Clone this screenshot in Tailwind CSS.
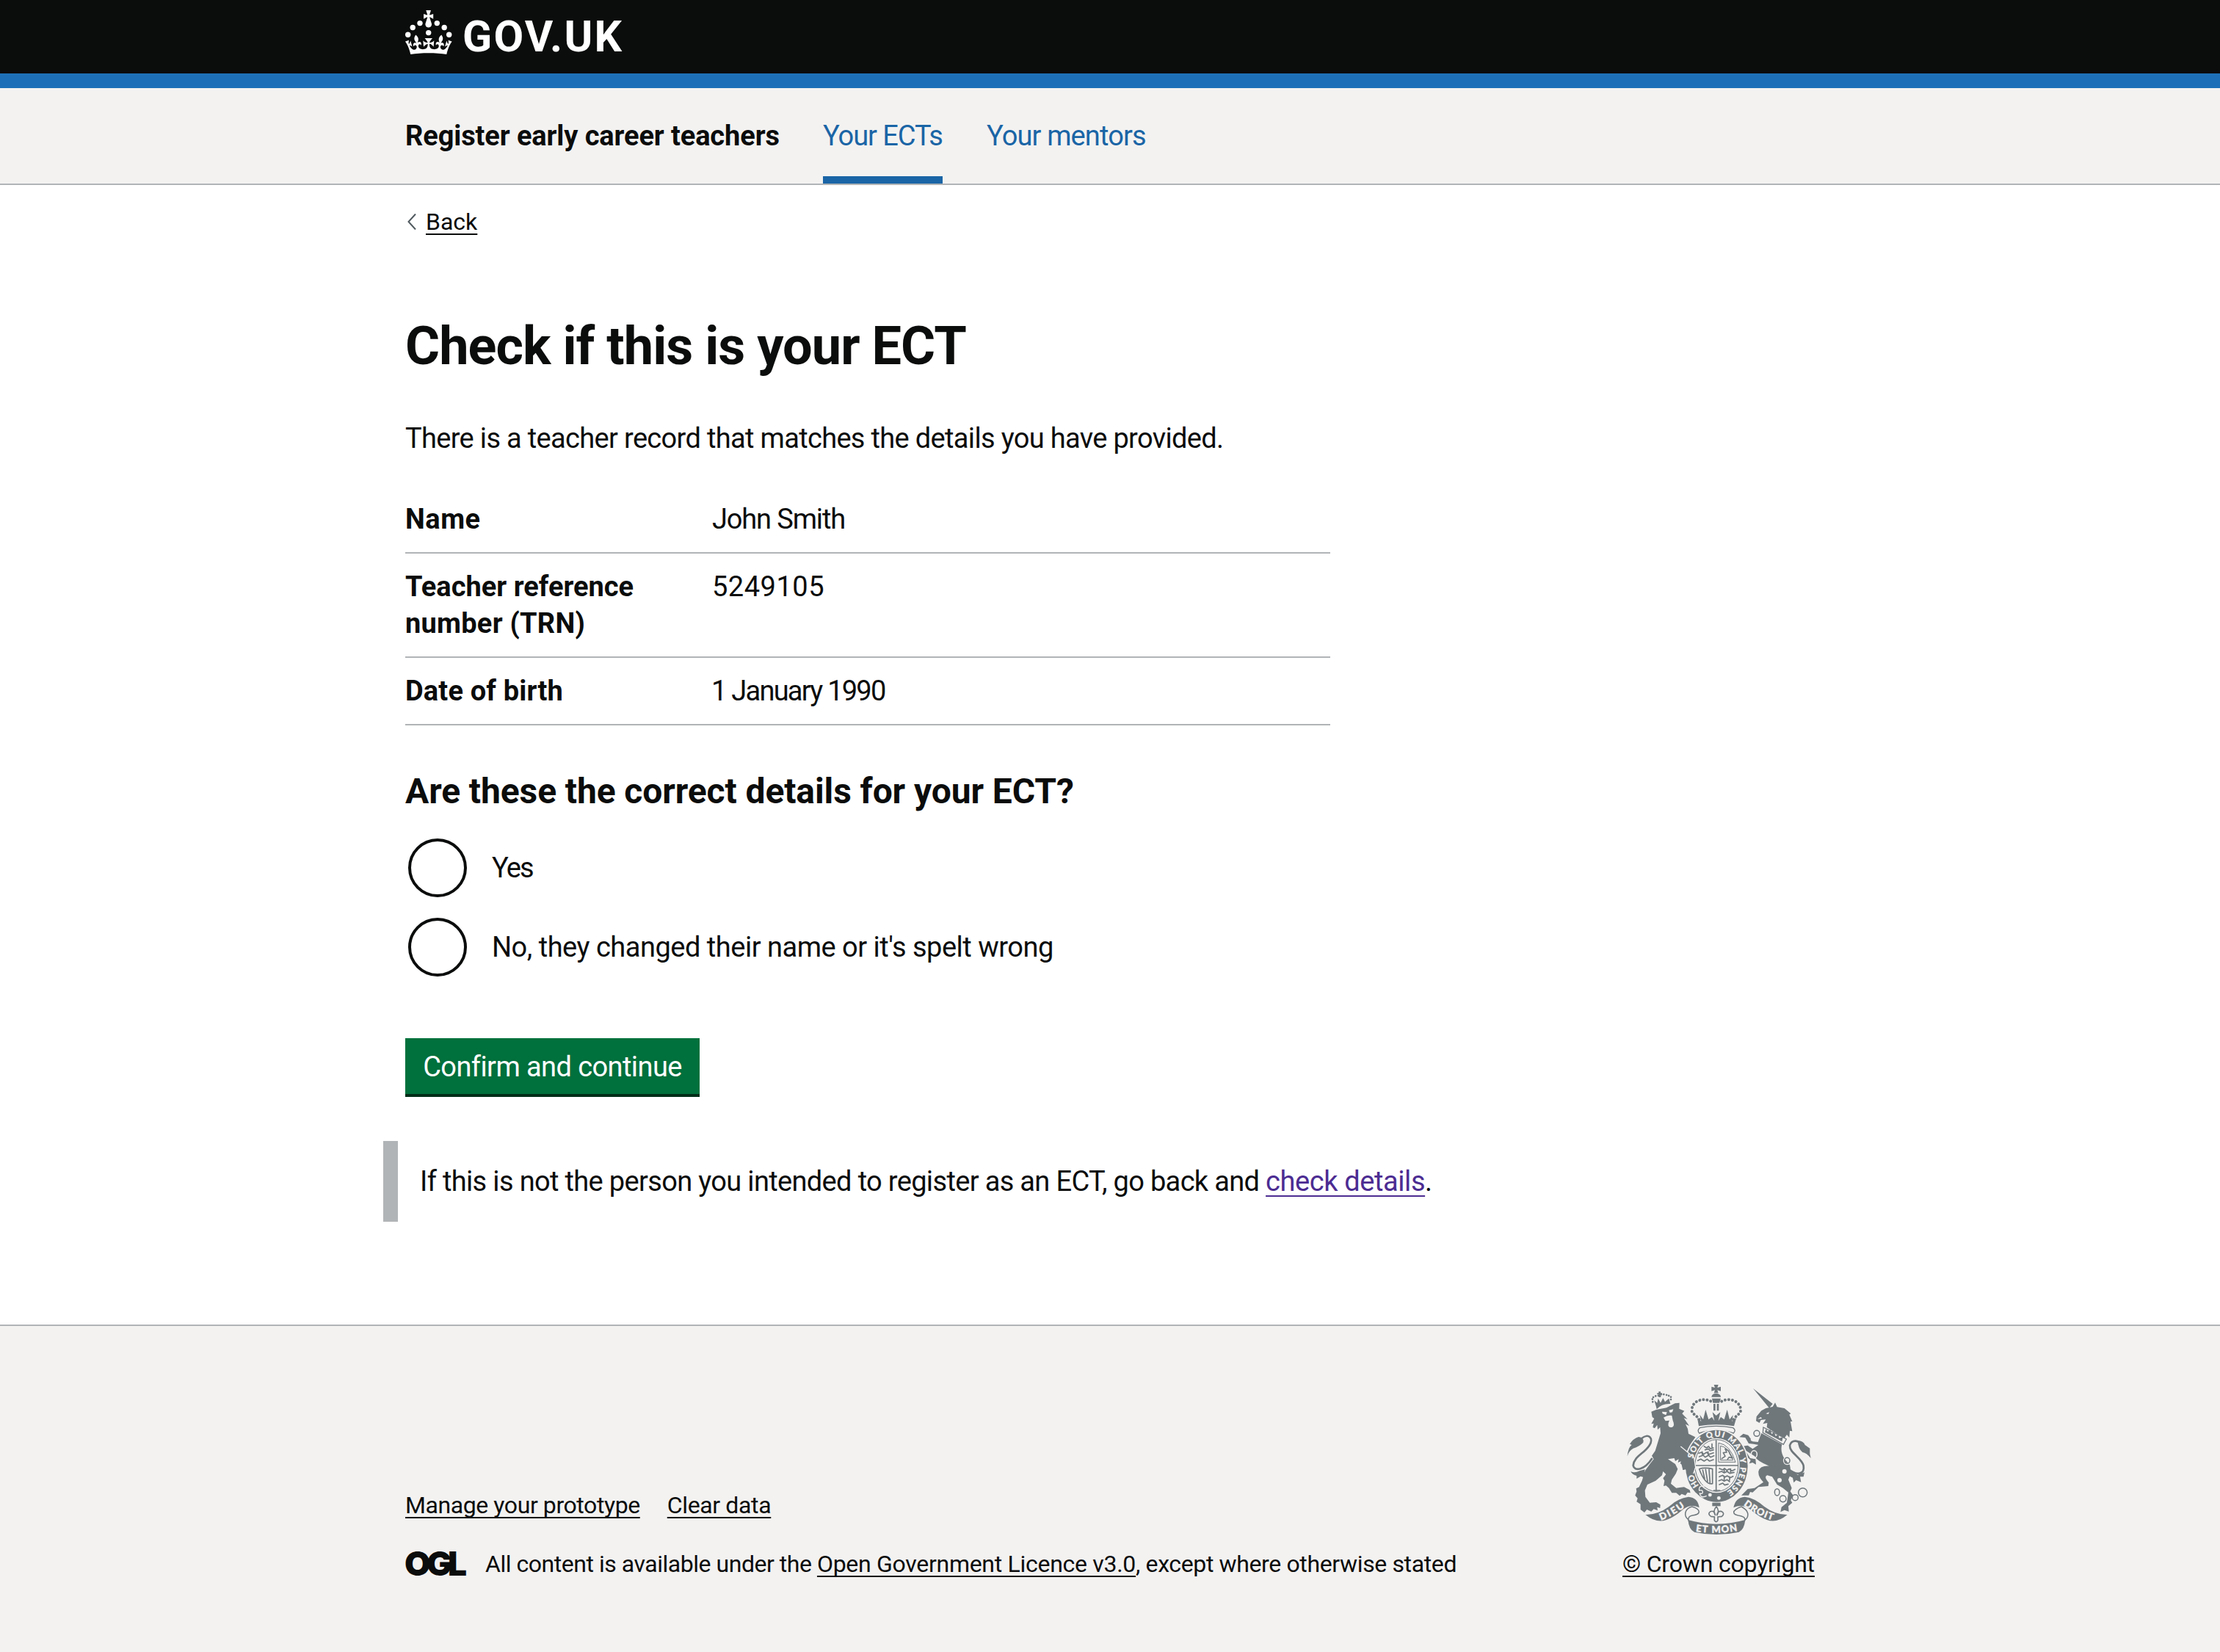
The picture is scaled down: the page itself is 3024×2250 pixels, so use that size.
<!DOCTYPE html>
<html lang="en">
<head>
<meta charset="utf-8">
<title>Check if this is your ECT</title>
<script src="https://cdn.jsdelivr.net/npm/@tailwindcss/browser@4"></script>
</head>
<body class="flex min-h-screen flex-col bg-white font-['Roboto',sans-serif] text-[38px] leading-[50px] text-[#0b0c0c]">

<header>
  <div class="h-[120px] border-b-[20px] border-[#1d70b8] bg-[#0b0c0c]">
    <div class="mx-auto flex h-full w-[1920px] items-start pt-[14px] text-white">
      <svg class="h-[60px] w-16 shrink-0 fill-current" viewBox="0 0 64 60" aria-hidden="true">
        <circle cx="20" cy="17.6" r="3.7"/><circle cx="10.2" cy="23.5" r="3.7"/><circle cx="3.7" cy="33.2" r="3.7"/>
        <circle cx="31.7" cy="30.6" r="3.7"/><circle cx="43.3" cy="17.6" r="3.7"/><circle cx="53.2" cy="23.5" r="3.7"/><circle cx="59.7" cy="33.2" r="3.7"/>
        <path d="M33.1,9.8c.2-.1.3-.3.5-.5l4.6,2.4v-6.8l-4.6,1.5c-.1-.2-.3-.3-.5-.5l1.9-5.9h-6.7l1.9,5.9c-.2.1-.3.3-.5.5l-4.6-1.5v6.8l4.6-2.4c.1.2.3.3.5.5l-2.6,8c-.9,2.8,1.2,5.7,4.1,5.7h0c3,0,5.1-2.9,4.1-5.7l-2.6-8ZM37,37.9s-3.4,3.8-4.1,6.1c2.2,0,4.2-.5,6.4-2.8l-.7,8.5c-2-2.8-4.4-4.1-5.7-3.8.1,3.1.5,6.7,5.8,7.2,3.7.3,6.7-1.5,7-3.8.4-2.6-2-4.3-3.7-1.6-1.4-4.5,2.4-6.1,4.9-3.2-1.9-4.5-1.8-7.7,2.4-10.9,3,4,2.6,7.3-1.2,11.1,2.4-1.3,6.2,0,4,4.6-1.2-2.8-3.7-2.2-4.2.2-.3,1.7.7,3.7,3,4.2,1.9.3,4.7-.9,7-5.9-1.3,0-2.4.7-3.9,1.7l2.4-8c.6,2.3,1.4,3.7,2.2,4.5.6-1.6.5-2.8,0-5.3l5,1.8c-2.6,3.6-5.2,8.7-7.3,17.5-7.4-1.1-15.7-1.7-24.5-1.7h0c-8.8,0-17.1.6-24.5,1.7-2.1-8.9-4.7-13.9-7.3-17.5l5-1.8c-.5,2.5-.6,3.7,0,5.3.8-.8,1.6-2.3,2.2-4.5l2.4,8c-1.5-1-2.6-1.7-3.9-1.7,2.3,5,5.2,6.2,7,5.9,2.3-.4,3.3-2.4,3-4.2-.5-2.4-3-3.1-4.2-.2-2.2-4.6,1.6-6,4-4.6-3.7-3.7-4.2-7.1-1.2-11.1,4.2,3.2,4.3,6.4,2.4,10.9,2.5-2.8,6.3-1.3,4.9,3.2-1.8-2.7-4.1-1-3.7,1.6.3,2.3,3.3,4.1,7,3.8,5.4-.5,5.7-4.2,5.8-7.2-1.3-.2-3.7,1-5.7,3.8l-.7-8.5c2.2,2.3,4.2,2.7,6.4,2.8-.7-2.3-4.1-6.1-4.1-6.1h10.6Z"/>
      </svg>
      <span class="ml-[14px] text-[59px] leading-[72px] font-bold tracking-[2.2px]">GOV.UK</span>
    </div>
  </div>
  <nav class="h-[132px] border-b-2 border-[#b1b4b6] bg-[#f3f2f1]">
    <div class="mx-auto flex h-full w-[1920px]">
      <span class="w-[569px] pt-10 font-bold tracking-[-0.11px] whitespace-nowrap">Register early career teachers</span>
      <a class="mr-[60px] w-[163px] border-b-[10px] border-[#1a65a6] pt-10 tracking-[-1.06px] whitespace-nowrap text-[#1a65a6]">Your ECTs</a>
      <a class="pt-10 tracking-[-0.88px] whitespace-nowrap text-[#1a65a6]">Your mentors</a>
    </div>
  </nav>
</header>

<main class="mx-auto w-[1920px] flex-1">
  <a class="mt-[30px] flex items-center text-[32px] leading-10">
    <svg class="mr-[13px] ml-[3px] h-[22px] w-3" viewBox="0 0 12 22" fill="none" stroke="#505a5f" stroke-width="2"><path d="M11 .5 1.500 11 11 21.500"/></svg>
    <span class="underline decoration-2 underline-offset-[5px] [text-decoration-skip-ink:none]">Back</span>
  </a>
  <h1 class="mt-[110px] text-[72px] leading-[80px] font-bold tracking-[-0.95px]">Check if this is your ECT</h1>
  <p class="mt-[60px] tracking-[-0.67px]">There is a teacher record that matches the details you have provided.</p>

  <dl class="mt-[60px] w-[1260px]">
    <div class="flex border-b-2 border-[#b1b4b6] pb-5">
      <dt class="w-[418px] font-bold tracking-[0.5px]">Name</dt>
      <dd class="tracking-[-1.15px]">John Smith</dd>
    </div>
    <div class="flex border-b-2 border-[#b1b4b6] py-5">
      <dt class="w-[418px] font-bold">Teacher reference<br><span class="tracking-[0.25px]">number (TRN)</span></dt>
      <dd class="tracking-[0.5px]">5249105</dd>
    </div>
    <div class="flex border-b-2 border-[#b1b4b6] py-5">
      <dt class="w-[418px] font-bold tracking-[0.17px]">Date of birth</dt>
      <dd class="-ml-px tracking-[-1.75px]">1 January 1990</dd>
    </div>
  </dl>

  <h2 class="mt-[60px] text-[48px] leading-[60px] font-bold tracking-[-0.1px]">Are these the correct details for your ECT?</h2>
  <div class="mt-[34px] flex flex-col gap-7 pl-1">
    <label class="flex items-center gap-[34px]">
      <span class="size-20 rounded-full border-4 border-[#0b0c0c]"></span>
      <span class="tracking-[-1.9px]">Yes</span>
    </label>
    <label class="flex items-center gap-[34px]">
      <span class="size-20 rounded-full border-4 border-[#0b0c0c]"></span>
      <span class="tracking-[-0.49px]">No, they changed their name or it's spelt wrong</span>
    </label>
  </div>

  <button class="mt-[84px] block h-20 w-[401px] border-b-4 border-[#002d18] bg-[#00703c] pt-[2px] tracking-[-0.58px] whitespace-nowrap text-white">Confirm and continue</button>

  <div class="mt-[60px] -ml-[30px] border-l-[20px] border-[#b1b4b6] py-[30px] pl-[30px] tracking-[-0.66px]">If this is not the person you intended to register as an ECT, go back and <a class="tracking-[-0.41px] text-[#4c2c92] underline decoration-2 underline-offset-[6px] [text-decoration-skip-ink:none]">check details</a>.</div>
</main>

<footer class="h-[446px] border-t-2 border-[#b1b4b6] bg-[#f3f2f1] text-[32px] leading-10">
  <div class="mx-auto flex w-[1920px] items-end justify-between pt-20">
    <div>
      <div class="mb-10 flex gap-[37px]">
        <a class="tracking-[-0.42px] underline decoration-2 underline-offset-[5px] [text-decoration-skip-ink:none]">Manage your prototype</a>
        <a class="tracking-[-0.36px] underline decoration-2 underline-offset-[5px] [text-decoration-skip-ink:none]">Clear data</a>
      </div>
      <div class="flex">
        <span class="-mt-px -ml-px w-[110px] font-['Inter',sans-serif] text-[46px] font-black tracking-[-5.7px]">OGL</span>
        <p><span class="tracking-[-0.47px]">All content is available under the </span><a class="tracking-[-0.29px] underline decoration-2 underline-offset-[5px] [text-decoration-skip-ink:none]">Open Government Licence v3.0</a><span class="tracking-[-0.37px]">, except where otherwise stated</span></p>
      </div>
    </div>
    <div class="w-[262px]">
      <svg class="mb-5 block h-[204px] w-[262px]" viewBox="60 48 786 612" fill="#6f777b" stroke="none">
        <defs>
          <path id="garter" d="M349 350A98 118 0 1 1 480 488"/>
          <path id="garterStart" d="M378 466A98 118 0 0 1 346 386"/>
          <path id="scrollLeft" d="M218 602Q268 584 326 540"/>
          <path id="scrollMid" d="M359 647Q443 660 529 645"/>
          <path id="scrollRight" d="M554 540Q612 584 680 604"/>
        </defs>
        <!-- lion -->
        <path d="M178 158 198 150 240 142 275 124 293 122 292 146 313 155 304 166 326 189 311 184 333 216 318 209 327 228 330 248 358 262 335 300 325 318 345 350 355 385 346 412 332 402 326 408 318 394 307 396 306 376 296 370 301 360 287 366 290 352 276 360 272 348 246 352 276 372 286 392 278 412 262 436 258 452 280 470 312 466 335 478 338 490 326 488 318 500 302 494 294 502 280 490 262 490 250 470 238 460 228 462 232 440 226 430 238 414 226 402 222 418 196 440 162 456 152 480 154 506 172 530 198 528 215 538 214 552 202 548 204 562 188 556 178 566 160 558 150 570 134 558 134 536 118 526 122 512 112 500 118 484 116 472 128 466 140 440 152 400 174 370 188 352 180 338 194 318 216 246 214 222 204 232 202 212 192 226 184 222 188 206 178 208 190 186 182 180Z"/>
        <path d="M80 340Q84 302 98 294L90 290Q104 268 126 261Q150 264 145 284Q130 300 104 308Q86 318 80 340Z"/>
        <path d="M138 268C166 244 190 266 170 296C148 330 108 340 104 378C108 402 148 400 182 348" fill="none" stroke="#6f777b" stroke-width="8"/>
        <path d="M94 402Q110 410 130 400L152 394 150 408 154 428 134 422 118 432 118 420Q100 416 94 402Z"/>
        <path d="M222 158l20 2-4 12-14-6ZM250 152l18-4-4 12-10 2ZM228 182q18-12 34-8l4 20q10 22-4 28-18 2-14-18l4-10-16 2Z" fill="#f3f2f1"/>
        <!-- lion's crown -->
        <path d="M198 138 190 112 202 122 206 104 216 122 226 102 234 118 250 104 256 126Q222 124 200 148Z"/>
        <path d="M184 118Q178 98 196 94T214 96Q212 84 232 88T258 98L258 112" fill="none" stroke="#6f777b" stroke-width="8" stroke-linecap="round" stroke-dasharray="0.1 10"/>
        <path d="M208 76h8v6h6v6h-6v10h-8v-10h-6v-6h6Z"/>
        <!-- royal crown -->
        <path d="M434 48h18l-4 12 14-4v18l-14-4 4 12h-18l4-12-14 4V56l14 4ZM424 98q2-12 14-14h10q14 4 14 14ZM426 104h36l-6 18h-26ZM432 126h8v28h-8ZM446 126h8v28h-8Z"/>
        <path d="M374 190C360 168 340 168 344 146C348 112 394 98 426 118M514 190C528 168 546 168 543 146C538 112 492 98 462 118" fill="none" stroke="#6f777b" stroke-width="12" stroke-linecap="round" stroke-dasharray="0.1 15"/>
        <path d="M372 217 366 184 382 198 376 170 390 190 400 150 412 190 426 180 436 196 428 160 443 174 460 160 452 196 462 180 476 190 488 150 498 190 512 172 508 198 526 182 516 217Q443 204 372 217Z"/>
        <path d="M376 224Q443 210 512 224Q526 234 514 246Q443 222 374 246Q364 234 376 224Z" fill="none" stroke="#6f777b" stroke-width="4"/>
        <!-- unicorn -->
        <path d="M594 63 674 126 660 143ZM606 196 608 178 628 154 646 144 674 138 684 121 692 139 722 144 748 166 742 170 754 198 747 198 754 238 744 236 742 264 732 252 722 266 690 248 650 222 652 204 634 208 646 190 626 192 620 204Z"/>
        <path d="M636 222 730 270 718 292 634 244Z" fill="#f3f2f1" stroke="#6f777b" stroke-width="4"/>
        <path d="M642 242 646 228 654 240 664 230 670 250 680 240 686 258 698 250 700 266 716 262 712 280Z"/>
        <path d="M628 246 712 292Q704 320 722 350L744 376Q752 410 738 436L752 470 746 484 758 500 748 520 754 530 738 544 740 566 722 560 706 568 710 548 732 530 738 488 716 470 692 456 672 424 652 418Q636 424 658 448L656 462 616 466 592 488 582 486 576 500 546 500 572 474 600 470 636 446Q614 424 616 402 622 378 660 380 612 362 600 340L560 314 548 316 546 300 572 296 592 310 616 294 596 290 576 288 562 264 538 262 554 248 574 254 592 280 614 282Z"/>
        <path d="M556 306 582 348 604 352 606 374 592 366 578 370 584 356 566 340 548 312Z"/>
        <path d="M738 392C772 420 806 416 800 378C792 346 742 326 744 296C752 270 784 274 788 296" fill="none" stroke="#6f777b" stroke-width="8"/>
        <path d="M776 276Q800 278 806 294L826 308Q824 330 830 348 812 326 796 324 778 310 776 276ZM738 390 776 416 804 406 800 424 786 424 790 446 770 438 760 448 756 428 740 420Z"/>
        <g fill="none" stroke="#6f777b" stroke-width="4.500"><circle cx="609" cy="247" r="12"/><ellipse cx="598" cy="332" rx="12" ry="15" stroke="#f3f2f1"/><ellipse cx="733" cy="358" rx="13" ry="14" stroke="#f3f2f1" stroke-width="7"/><ellipse cx="733" cy="358" rx="11" ry="12"/><ellipse cx="692" cy="487" rx="10" ry="14"/><circle cx="716" cy="514" r="13"/><circle cx="766" cy="509" r="12"/><circle cx="797" cy="488" r="18"/></g>
        <g fill="#f3f2f1"><circle cx="722" cy="402" r="9"/><circle cx="702" cy="438" r="9"/><circle cx="590" cy="272" r="6"/><path d="M646 166 660 160 656 168ZM612 188 626 180 630 186Z"/></g>
        <!-- garter and shield -->
        <ellipse cx="445" cy="380" rx="132" ry="152" fill="#f3f2f1"/>
        <ellipse cx="445" cy="380" rx="127" ry="147"/>
        <ellipse cx="445" cy="378" rx="94" ry="112" fill="#f3f2f1"/>
        <ellipse cx="445" cy="378" rx="88" ry="106" fill="none" stroke="#6f777b" stroke-width="3"/>
        <path d="M443 274V484M357 378H533M432 480h28" stroke="#6f777b" stroke-width="5" fill="none"/>
        <g fill="none" stroke="#6f777b" stroke-width="5" stroke-linecap="round" stroke-linejoin="round">
          <path d="M394 300l10 6 8-6 8 10 12-4M398 314l14-4 6 8 14-4M372 328l12-4 8 8 12-8 10 8 18-6M374 342l16-6 8 8 14-8 8 8 14-6M368 358l12-6 14 8 12-8 10 8 16-6M426 290v14M386 322v10M410 322v10"/>
          <path d="M456 390l14 6 8-6 8 8 10-6 12 8 12-6M454 406l12-4 10 6 12-6 10 8 18-4M456 424l14-6 8 8 10-6 12 8 12-6M454 440l12-4 10 6 12-6 10 8M456 456l14-6 8 8 14-4M476 390v14M502 392v14M476 422v14M498 424v14"/>
          <path d="M454 286Q500 292 522 364H454ZM462 298Q494 302 512 356H462Z" stroke-width="3"/>
          <path d="M466 350l14-10-8-14 14-2-6-14 14 8 6 14 10 16-14-4-6 8"/>
          <path d="M374 392Q396 384 428 392V452Q398 458 374 392ZM388 396 396 432M400 394 408 444M414 394 418 448"/>
        </g>
        <!-- lion's foreleg over the garter -->
        <path d="M298 300 352 346 358 384 350 410 338 396 330 408 318 394 307 396 296 350Z"/>
        <path d="M298 300 353 346 359 386 350 411" stroke="#f3f2f1" stroke-width="4" fill="none"/>
        <g fill="#f3f2f1" stroke="#f3f2f1" stroke-width=".8" font-family="Lato, sans-serif" font-weight="900" font-size="33">
          <text><textPath href="#garter" textLength="436">SOIT QUI MAL Y PENSE</textPath></text>
          <text><textPath href="#garterStart" startOffset="8">HO</textPath></text>
          <circle cx="418" cy="498" r="7"/><circle cx="454" cy="511" r="7"/>
        </g>
        <path d="M398 462q-28-4-24 18 14-4 14 6t-12 6q4 22 28 10" fill="none" stroke="#f3f2f1" stroke-width="4"/>
        <!-- fleur-de-lis -->
        <path d="M427 530h34v14h-34Z"/>
        <path d="M444 546q-16 16-4 36-4-22-20-16-14 10 2 20l14 2v14q8 12 14 0v-14l16-2q14-12 0-20-18-4-20 16 12-20-2-36Z" fill="none" stroke="#6f777b" stroke-width="5"/>
        <!-- scroll -->
        <path d="M154 579Q204 580 250 546 290 510 330 506 368 508 374 550 340 534 310 556 270 590 240 600 200 616 154 579ZM734 579Q686 580 640 546 600 510 560 506 522 508 514 550 548 534 580 556 620 590 650 600 690 616 734 579ZM328 600Q443 634 562 600 558 640 536 650 443 670 354 650 332 640 328 600Z"/>
        <path d="M330 600C310 584 312 556 344 546M344 546C380 556 384 578 346 582C332 584 328 592 330 604M562 600C580 584 576 562 546 546M546 546C504 562 506 580 544 584C558 588 562 592 560 604" fill="none" stroke="#6f777b" stroke-width="4.500"/>
        <g fill="#f3f2f1" stroke="#f3f2f1" stroke-width="1.200" font-family="Lato, sans-serif" font-weight="900" font-size="39">
          <text><textPath href="#scrollLeft" textLength="112">DIEU</textPath></text>
          <text><textPath href="#scrollMid" textLength="172">ET MON</textPath></text>
          <text><textPath href="#scrollRight" textLength="134">DROIT</textPath></text>
        </g>
      </svg>
      <a class="tracking-[-0.18px] whitespace-nowrap underline decoration-2 underline-offset-[5px] [text-decoration-skip-ink:none]">© Crown copyright</a>
    </div>
  </div>
</footer>
</body>
</html>
